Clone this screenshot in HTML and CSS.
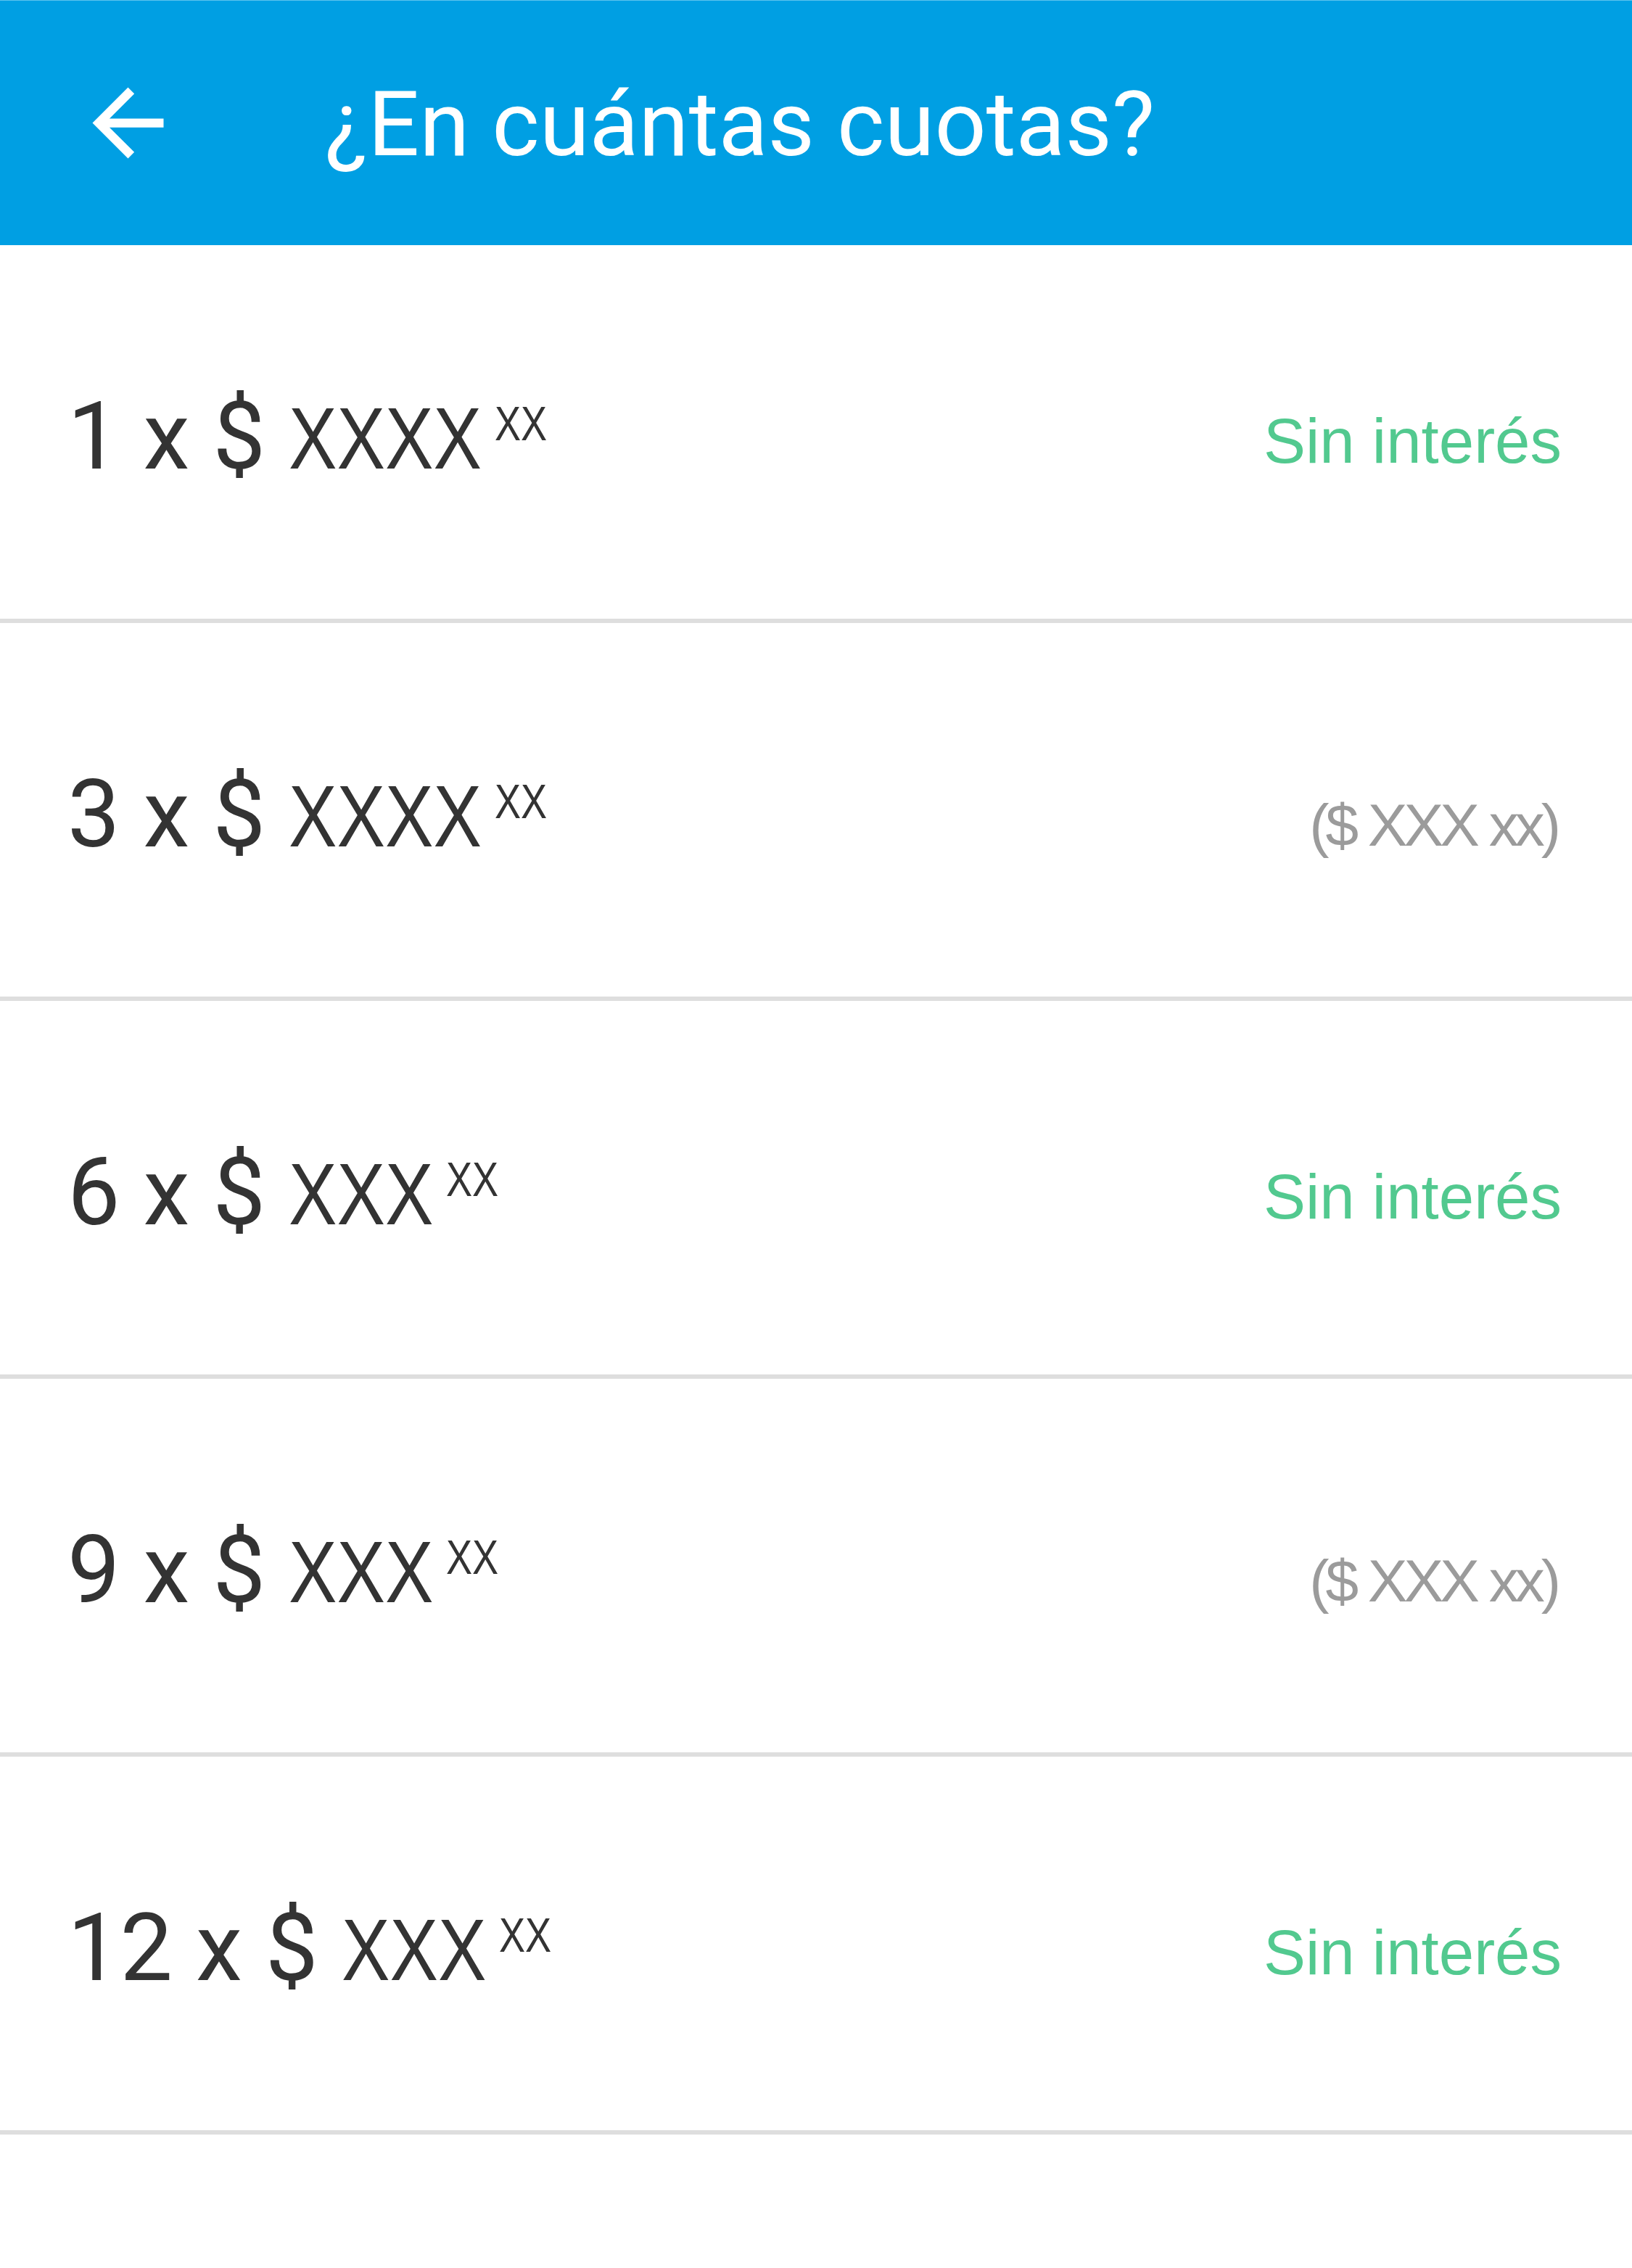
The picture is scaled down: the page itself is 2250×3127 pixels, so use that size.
FILE: index.html
```html
<!DOCTYPE html>
<html lang="es">
<head>
<meta charset="utf-8">
<title>¿En cuántas cuotas?</title>
<link rel="stylesheet" href="styles.css">
</head>
<body>
<header class="appbar">
  <svg class="back" viewBox="0 0 24 24" aria-hidden="true"><path d="M20 11H7.83l5.59-5.59L12 4l-8 8 8 8 1.41-1.41L7.83 13H20v-2z"/></svg>
  <h1 class="title">¿En cuántas cuotas?</h1>
</header>
<main class="list">
  <div class="row">
    <span class="amount">1 x $ <span class="num n4">XXXX</span><span class="cents">XX</span></span>
    <span class="free">Sin interés</span>
  </div>
  <div class="row">
    <span class="amount">3 x $ <span class="num n4">XXXX</span><span class="cents">XX</span></span>
    <span class="total">($ XXX xx)</span>
  </div>
  <div class="row">
    <span class="amount">6 x $ <span class="num n3">XXX</span><span class="cents">XX</span></span>
    <span class="free">Sin interés</span>
  </div>
  <div class="row">
    <span class="amount">9 x $ <span class="num n3">XXX</span><span class="cents">XX</span></span>
    <span class="total">($ XXX xx)</span>
  </div>
  <div class="row">
    <span class="amount">12 x $ <span class="num n3">XXX</span><span class="cents">XX</span></span>
    <span class="free">Sin interés</span>
  </div>
</main>
</body>
</html>
```

FILE: styles.css
```css
html, body {
  margin: 0;
  padding: 0;
  background: #ffffff;
}

body {
  font-family: Roboto, "Liberation Sans", sans-serif;
  width: 2250px;
  min-height: 3127px;
}

.appbar {
  box-sizing: border-box;
  height: 338px;
  background: #009fe3;
  border-top: 1px solid #5cc3ee;
  display: flex;
  align-items: center;
  padding-left: 103px;
}

.back {
  width: 147px;
  height: 147px;
  fill: #ffffff;
  flex: none;
}

.title {
  margin: 0 0 0 198px;
  padding-top: 4px;
  font-family: Roboto, sans-serif;
  font-weight: 400;
  font-size: 125px;
  line-height: 1;
  color: #ffffff;
}

.list {
  display: flex;
  flex-direction: column;
}

.row {
  box-sizing: border-box;
  height: 521px;
  border-bottom: 6px solid #dedede;
  padding: 0 97px 0 93px;
  display: flex;
  justify-content: space-between;
  align-items: center;
}

.amount {
  margin-top: 12px;
  font-family: Roboto, sans-serif;
  font-size: 129px;
  line-height: 1;
  color: #333333;
  white-space: nowrap;
}

.num {
  display: inline-block;
  font-family: "Liberation Sans", Arial, sans-serif;
  font-size: 121px;
  line-height: 1;
  transform: scaleX(0.824);
  transform-origin: left center;
}

.num.n4 {
  margin-right: -57px;
}

.num.n3 {
  margin-right: -43px;
}

.cents {
  display: inline-block;
  font-family: "Liberation Sans", Arial, sans-serif;
  font-size: 66px;
  line-height: 1;
  margin-left: 18px;
  vertical-align: 39px;
  transform: scaleX(0.82);
  transform-origin: left center;
}

.free {
  margin-top: 23px;
  font-family: "Liberation Sans", Arial, sans-serif;
  font-size: 87px;
  line-height: 1;
  color: #52c98f;
}

.total {
  margin-top: 42px;
  margin-right: 6px;
  font-family: "Liberation Sans", Arial, sans-serif;
  font-size: 82px;
  line-height: 1;
  letter-spacing: -5px;
  color: #9b9b9b;
}
```
